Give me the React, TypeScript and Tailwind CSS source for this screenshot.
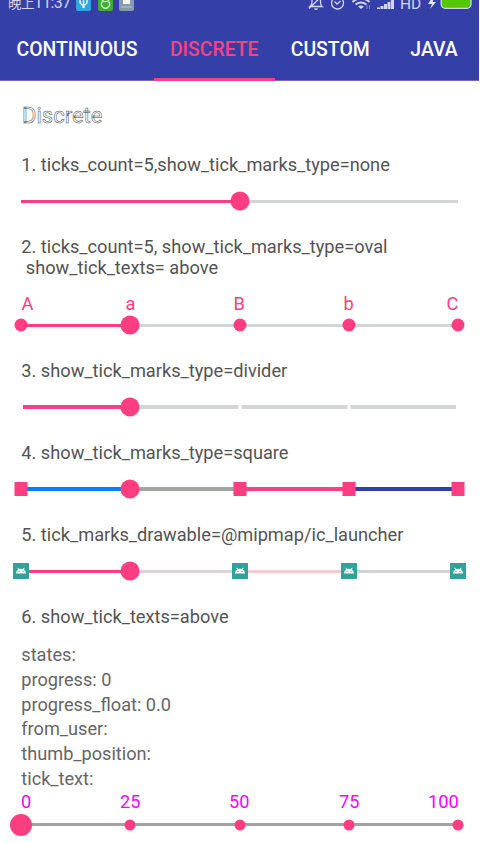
import type { ReactNode } from "react";

const TABS = [
  { label: "CONTINUOUS", width: "w-[154px]", active: false },
  { label: "DISCRETE", width: "w-[120.500px]", active: true },
  { label: "CUSTOM", width: "w-[111.500px]", active: false },
  { label: "JAVA", width: "w-[96px]", active: false },
];

const STATES = ["states:", "progress: 0", "progress_float: 0.0", "from_user:", "thumb_position:", "tick_text:"];

function StatusBar() {
  return (
    <div className="flex h-[18px] items-start overflow-hidden text-[#d3d5f3]">
      <div className="-mt-[7px] ml-[8px] w-[61px] whitespace-nowrap font-['Roboto','Noto_Sans_CJK_SC',sans-serif] text-[16px] leading-[20px] tracking-[-0.600px]">
        <span className="text-[13.500px]">晚上</span>11:37
      </div>
      <svg width="60" height="12" viewBox="0 0 60 12" className="ml-[7px]" fill="none">
        <rect x="0" y="-5" width="15" height="16" rx="2" fill="#35a4e4" />
        <path d="M7.500-3v11M4 0v2q0 2 3.500 3.500M11 0v2q0 2-3.500 3.500" stroke="#fff" strokeWidth="1.300" />
        <circle cx="7.500" cy="7" r="1.200" fill="#fff" />
        <rect x="22" y="-5" width="15" height="16" rx="2" fill="#3eae35" />
        <path d="M26.500 1.500a4 4 0 1 0 6 0M26 0l2 1.500h3L33 0" stroke="#d9f5cf" strokeWidth="1.200" />
        <rect x="43" y="-5" width="15" height="16" rx="2" fill="#829bab" />
        <path d="M47-2h7v6h-7z" fill="#f3f3f3" />
        <path d="M45 7h11" stroke="#b6c6ce" />
      </svg>
      <div className="flex-1" />
      <svg width="92" height="12" viewBox="309 0 92 12" fill="none" stroke="#d3d5f3" strokeWidth="1.300">
        <path d="M313-1v3q0 3-2 4.500h12q-1.500-1-1.500-4.500v-3M310 8.500 323-4M315.500 8.500q1.500 1.500 3 0" />
        <circle cx="338.500" cy="3" r="6" />
        <path d="m335.500 1.500 2.500 2.500L341.500 1" />
        <path d="M353.500 2q8.500-7 17 0M356.500 4.500q5.500-4 11 0" strokeWidth="1.800" />
        <path d="m359 6.500 3 2.500 3-2.500q-3-2-6 0z" fill="#d3d5f3" stroke="none" />
        <path d="M368 5v4M370.500 9V5" strokeWidth="1" stroke="#7c82d2" />
        <path d="M378 9V7.500h3V9zM381.500 9V6h3v3zM385 9V4h3v5zM388.500 9V2h2.800v7zM391.800 9V-1h3.200V9z" fill="#d3d5f3" stroke="none" />
      </svg>
      <div className="-mt-[6px] w-[22px] font-[Roboto,sans-serif] text-[15.500px] leading-[20px]">HD</div>
      <svg width="51" height="12" viewBox="429 0 51 12" className="ml-[6px]">
        <path d="M433.500-3 429 4h4l-2 5 6-7h-3.500l2-5z" fill="#e4e5fa" />
        <rect x="442.200" y="-6" width="29.800" height="14.300" rx="4" fill="#55c700" stroke="#d3d5f3" strokeWidth="1.300" />
      </svg>
    </div>
  );
}

function Caption({ children }: { children: ReactNode }) {
  return <p className="whitespace-pre pl-[0.300px] text-[18.220px] leading-[21px] text-[#535353]">{children}</p>;
}

// Centres of the five evenly spaced stops on the track.
const STOPS = ["left-0", "left-1/4", "left-1/2", "left-3/4", "left-full"];

function Slider({ segments, thick = "h-[3px]", inset = "", thumb, thumbSize = "size-[19px]", marks = [], mark }: {
  segments: string[];
  thick?: string;
  inset?: string;
  thumb: number;
  thumbSize?: string;
  marks?: number[];
  mark?: ReactNode;
}) {
  return (
    <div className="relative ml-[0.400px] flex h-[22px] w-[436.400px] items-center">
      <div className={`flex w-full ${inset} ${thick}`}>
        {segments.map((s, i) => (
          <div key={i} className={`h-full flex-1 ${s}`} />
        ))}
      </div>
      {marks.map((m) => (
        <div key={m} className={`absolute top-1/2 -translate-x-1/2 -translate-y-1/2 ${STOPS[m]}`}>{mark}</div>
      ))}
      <div className={`absolute top-1/2 -translate-x-1/2 -translate-y-1/2 rounded-full bg-[#ff3d80] ${STOPS[thumb]} ${thumbSize}`} />
    </div>
  );
}

function Launcher() {
  return (
    <svg width="16" height="16" viewBox="0 0 16 16" className="block">
      <path d="M0 0h16v16H0z" fill="#30a299" />
      <path d="M3 10.500Q3.200 7.500 5.300 6.500L4.300 5l.5-.4L6.200 6.100q1.800-.6 3.600 0l1.400-1.500.5.4-1 1.500q2.100 1 2.300 4z" fill="#fff" />
      <path d="M5.500 8h1v1h-1zM9.500 8h1v1h-1z" fill="#30a299" />
    </svg>
  );
}

function TickTexts({ items, className }: { items: [string, string][]; className: string }) {
  return (
    <div className={`flex h-[21px] whitespace-nowrap text-[18.200px] leading-[21px] ${className}`}>
      {items.map(([text, width]) => (
        <span key={text} className={width}>{text}</span>
      ))}
    </div>
  );
}

const PINK = "bg-[#ff3d80]";
const GRAY = "bg-[#d2d5d3]";

export default function App() {
  return (
    <div className="h-[843px] w-[480px] overflow-hidden bg-white font-[Roboto,sans-serif]">
      <header className="h-[81px] w-[479px] border-b border-[#7168b8] bg-[#3440a7]">
        <StatusBar />
        <nav className="flex h-[63px]">
          {TABS.map((t) => (
            <div
              key={t.label}
              className={`flex shrink-0 items-center justify-center border-b-[3px] pt-[4px] text-[19.400px] font-medium ${t.width} ${
                t.active ? "border-[#ff4081] text-[#ff4081]" : "border-transparent text-white"
              }`}
            >
              {t.label}
            </div>
          ))}
        </nav>
      </header>

      <main className="pl-[21px]">
        <h1 className="mt-[21px] h-[29px] pl-[1px] text-[22px] leading-[28px] text-white [-webkit-text-stroke:0.500px_#444]">Discrete</h1>

        <section className="mt-[23px] h-[82px]">
          <Caption>1. ticks_count=5,show_tick_marks_type=none</Caption>
          <div className="mt-[15px]">
            <Slider segments={[PINK, PINK, GRAY, GRAY]} thumb={2} />
          </div>
        </section>

        <section className="h-[124px]">
          <Caption>{"2. ticks_count=5, show_tick_marks_type=oval\n show_tick_texts= above"}</Caption>
          <TickTexts
            className="mt-[15px] pl-[0.500px] text-[#ff3d80]"
            items={[["A", "w-[104px]"], ["a", "w-[108px]"], ["B", "w-[110px]"], ["b", "w-[103px]"], ["C", "w-[12px]"]]}
          />
          <Slider
            segments={[PINK, GRAY, GRAY, GRAY]}
            thumb={1}
            marks={[0, 2, 3, 4]}
            mark={<div className="size-[13px] rounded-full bg-[#ff3d80]" />}
          />
        </section>

        <section className="h-[82px]">
          <Caption>3. show_tick_marks_type=divider</Caption>
          <div className="mt-[15px]">
            <Slider
              segments={[PINK, GRAY, GRAY, GRAY]}
              thick="h-[4px]"
              inset="px-[2px]"
              thumb={1}
              marks={[2, 3]}
              mark={<div className="h-[4px] w-[3px] bg-white" />}
            />
          </div>
        </section>

        <section className="h-[82px]">
          <Caption>4. show_tick_marks_type=square</Caption>
          <div className="mt-[15px]">
            <Slider
              segments={["bg-[#007fff]", "bg-[#a2a5a0]", PINK, "bg-[#3040a2]"]}
              thick="h-[4px]"
              thumb={1}
              marks={[0, 2, 3, 4]}
              mark={<div className="h-[14px] w-[13px] bg-[#ff3d80]" />}
            />
          </div>
        </section>

        <section className="h-[82px]">
          <Caption>5. tick_marks_drawable=@mipmap/ic_launcher</Caption>
          <div className="mt-[15px]">
            <Slider
              segments={[PINK, "bg-[#d8d5d6]", "bg-[#efcfd0]", "bg-[#d2d2d4]"]}
              thumb={1}
              marks={[0, 2, 3, 4]}
              mark={<Launcher />}
            />
          </div>
        </section>

        <section>
          <Caption>6. show_tick_texts=above</Caption>
          <div className="mt-[16px] pl-[0.300px] text-[18.150px] leading-[24.800px] text-[#656565]">
            {STATES.map((s) => (
              <p key={s}>{s}</p>
            ))}
          </div>
          <TickTexts
            className="-mt-[1px] text-[#ff00ff]"
            items={[["0", "w-[99px]"], ["25", "w-[109px]"], ["50", "w-[110px]"], ["75", "w-[89px]"], ["100", "w-[32px]"]]}
          />
          <div className="mt-[2px]">
            <Slider
              segments={["bg-[#a2a2a2]", "bg-[#a2a2a2]", "bg-[#a2a2a2]", "bg-[#a2a2a2]"]}
              thumb={0}
              thumbSize="size-[22px]"
              marks={[1, 2, 3, 4]}
              mark={<div className="size-[11px] rounded-full bg-[#ff3d80]" />}
            />
          </div>
        </section>
      </main>
    </div>
  );
}
